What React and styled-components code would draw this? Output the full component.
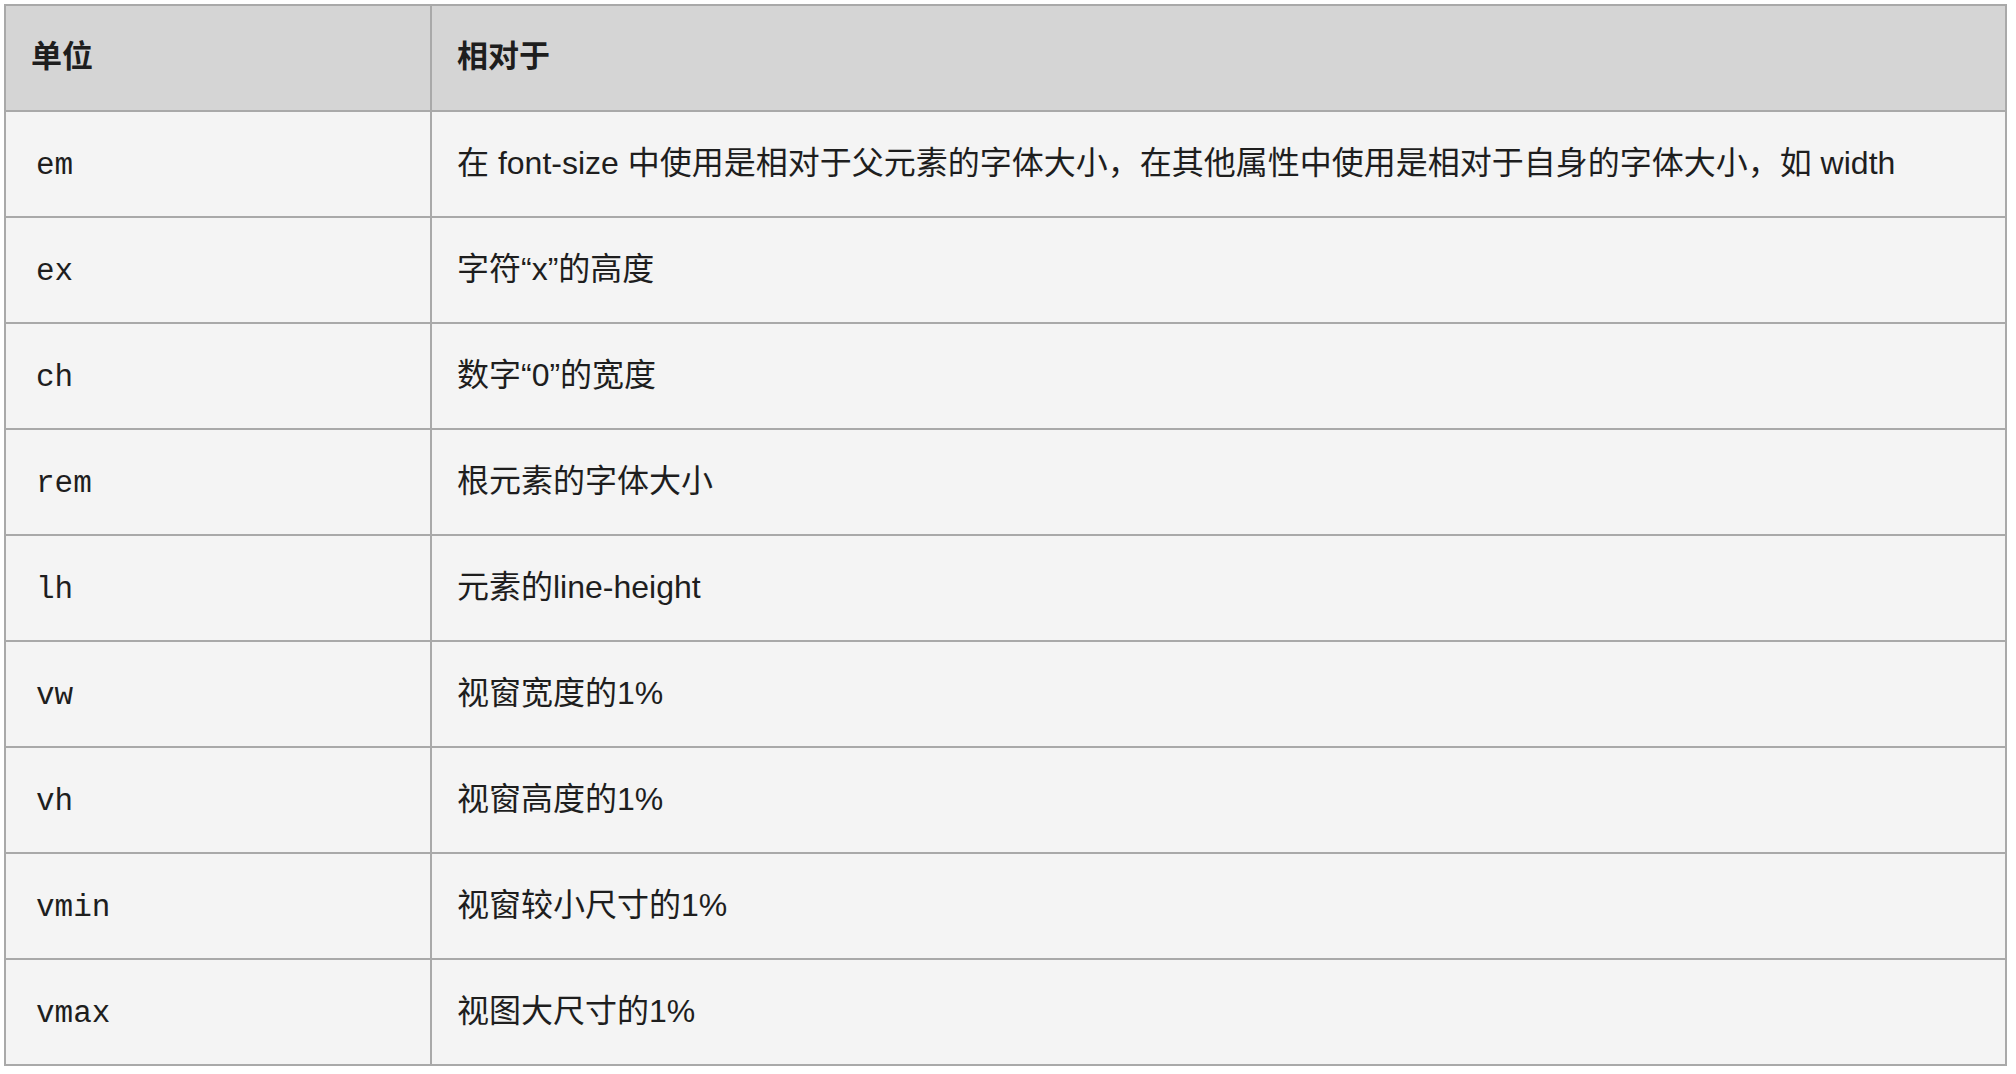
import React from "react";
import styled, { createGlobalStyle } from "styled-components";

const GlobalStyle = createGlobalStyle`
  html, body {
    margin: 0;
    padding: 0;
    background: #ffffff;
  }
  body {
    font-family: "Liberation Sans", "Noto Sans CJK SC", sans-serif;
    color: #1e1e1e;
  }
`;

const rows = [
  { unit: "em", desc: "在 font-size 中使用是相对于父元素的字体大小，在其他属性中使用是相对于自身的字体大小，如 width" },
  { unit: "ex", desc: "字符“x”的高度" },
  { unit: "ch", desc: "数字“0”的宽度" },
  { unit: "rem", desc: "根元素的字体大小" },
  { unit: "lh", desc: "元素的line-height" },
  { unit: "vw", desc: "视窗宽度的1%" },
  { unit: "vh", desc: "视窗高度的1%" },
  { unit: "vmin", desc: "视窗较小尺寸的1%" },
  { unit: "vmax", desc: "视图大尺寸的1%" },
];

const Page = styled.div`
  padding: 4px 0 0 4px;
`;

const Table = styled.table`
  width: 2003px;
  border-collapse: collapse;
  table-layout: fixed;
  border: 2px solid #a9a9a9;
  font-size: 32px;
`;

const HeadCell = styled.th`
  height: 103px;
  padding: 0 0 1px 25px;
  text-align: left;
  font-weight: 700;
  font-size: 31px;
  line-height: 1.3;
  background: #d5d5d5;
  border: 2px solid #a9a9a9;
  width: ${(p) => (p.$first ? "399px" : "auto")};
`;

const Cell = styled.td`
  height: ${(p) => (p.$code ? "100px" : "104px")};
  padding: ${(p) => (p.$code ? "4px 0 0 30px" : "0 0 0 25px")};
  line-height: 1.3;
  background: #f4f4f4;
  border: 2px solid #a9a9a9;
  white-space: nowrap;
  font-size: ${(p) => (p.$code ? "31px" : "32px")};
  font-family: ${(p) =>
    p.$code
      ? `"Liberation Mono", "Courier New", monospace`
      : `"Liberation Sans", "Noto Sans CJK SC", sans-serif`};
`;

export default function App() {
  return (
    <>
      <GlobalStyle />
      <Page>
        <Table>
          <thead>
            <tr>
              <HeadCell $first>单位</HeadCell>
              <HeadCell>相对于</HeadCell>
            </tr>
          </thead>
          <tbody>
            {rows.map((r) => (
              <tr key={r.unit}>
                <Cell $code>{r.unit}</Cell>
                <Cell>{r.desc}</Cell>
              </tr>
            ))}
          </tbody>
        </Table>
      </Page>
    </>
  );
}
